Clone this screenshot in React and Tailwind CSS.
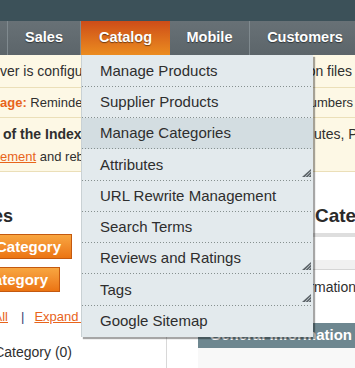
import React from "react";

const items = [
  { t: "Manage Products", h: "h-[32px]" },
  { t: "Supplier Products", h: "h-[31px]" },
  { t: "Manage Categories", h: "h-[31px]", active: true },
  { t: "Attributes", h: "h-[32px]", sub: true },
  { t: "URL Rewrite Management", h: "h-[31px]" },
  { t: "Search Terms", h: "h-[31px]" },
  { t: "Reviews and Ratings", h: "h-[31px]", sub: true },
  { t: "Tags", h: "h-[32px]", sub: true },
  { t: "Google Sitemap", h: "h-[31px]", last: true },
];

function Grip() {
  return (
    <svg width="9" height="8" viewBox="0 0 9 8" className="absolute right-[2px] bottom-[4px]">
      <polygon points="9,0 9,8 0,8" fill="#5d6469" />
      <line x1="3.2" y1="8" x2="9" y2="2.2" stroke="#cdd6da" strokeWidth="0.9" />
      <line x1="6.2" y1="8" x2="9" y2="5.2" stroke="#cdd6da" strokeWidth="0.9" />
    </svg>
  );
}

export default function App() {
  return (
    <div className="w-[355px] h-[368px] relative overflow-hidden bg-white font-['Liberation_Sans',Arial,sans-serif] text-[#2f2f2f]">
      {/* top bar */}
      <div className="h-[21px] bg-[#3c5159]" />
      {/* nav */}
      <div className="h-[34px] flex bg-gradient-to-b from-[#687176] to-[#5c656a] text-white font-bold text-[14.5px] [text-shadow:0_1px_1px_rgba(0,0,0,0.5)] whitespace-nowrap">
        <div className="w-[8px] shrink-0 border-r border-[#808a8f]" />
        <div className="w-[73px] shrink-0 flex items-center justify-center border-r border-[#808a8f]">Sales</div>
        <div className="w-[89px] shrink-0 flex items-center justify-center bg-gradient-to-b from-[#cd4c18] to-[#eb8c20]">Catalog</div>
        <div className="w-[80px] shrink-0 flex items-center justify-center border-r border-[#808a8f]">Mobile</div>
        <div className="w-[110px] shrink-0 flex items-center justify-center">Customers</div>
      </div>

      {/* notices */}
      <div className="bg-[#fdf8e5] whitespace-nowrap">
        <div className="h-[33px] flex items-center border-b border-[#ebdfb8] text-[14px]">
          <div className="w-[81px] shrink-0 flex">
            <span className="w-0 shrink-0 flex justify-end">Your web ser</span>
            <span className="shrink-0">ver is configured incorrectly.</span>
          </div>
          <div className="ml-auto pr-[3px] shrink-0">As a result, configuration files</div>
        </div>
        <div className="h-[30px] flex items-center border-b border-[#ebdfb8] text-[13px]">
          <div className="w-[81px] shrink-0 flex">
            <span className="w-0 shrink-0 flex justify-end font-bold text-[#e8641b]">Latest Mess</span>
            <span className="shrink-0"><b className="text-[#e8641b]">age:</b> Reminder: Change</span>
          </div>
          <div className="ml-auto pr-[2px] shrink-0">Magento's default phone numbers</div>
        </div>
        <div className="pt-[7px] pb-[5px] border-b border-[#ebdfb8]">
          <div className="h-[18px] leading-[18px] flex text-[14px]">
            <div className="w-[314px] shrink-0 flex overflow-hidden">
              <span className="w-[3px] shrink-0 flex justify-end font-bold">One or more&nbsp;</span>
              <span className="shrink-0 font-bold">of the Indexes are not up to date:</span>
            </div>
            <span className="shrink-0">utes, Product Prices</span>
          </div>
          <div className="mt-[5px] h-[18px] leading-[18px] flex text-[13px]">
            <span className="w-0 shrink-0 flex justify-end">
              Click here to go to&nbsp;<span className="text-[#e8641b] underline">Index Manag</span>
            </span>
            <span className="shrink-0">
              <span className="text-[#e8641b] underline">ement</span> and rebuild required indexes.
            </span>
          </div>
        </div>
      </div>

      {/* content */}
      <div className="flex h-[196px] whitespace-nowrap">
        <div className="w-[166px] shrink-0 flex flex-col pt-[32px]">
          <div className="w-[13px] flex justify-end text-[18px] leading-[24px] font-bold text-[#2a2a2a]">Categories</div>
          <div className="mt-[6px] w-[72px] flex justify-end">
            <button className="shrink-0 h-[25px] pl-[10px] pr-[10px] border border-[#c4590f] bg-gradient-to-b from-[#f8a640] to-[#eb7411] text-white font-bold text-[15px] leading-none">
              Add Root Category
            </button>
          </div>
          <div className="mt-[8px] w-[60px] flex justify-end">
            <button className="shrink-0 h-[25px] pl-[10px] pr-[11px] border border-[#c4590f] bg-gradient-to-b from-[#f8a640] to-[#eb7411] text-white font-bold text-[15px] leading-none">
              Add Subcategory
            </button>
          </div>
          <div className="mt-[16px] h-[18px] flex items-center text-[13px]">
            <div className="w-[8px] shrink-0 flex justify-end">
              <span className="text-[#e8641b] underline">Collapse All</span>
            </div>
            <span className="ml-[13px] text-[#3b3b72]">|</span>
            <span className="ml-[10px] text-[#e8641b] underline">Expand All</span>
          </div>
          <div className="mt-[17px] w-[72px] flex justify-end text-[14px] leading-[18px]">Default Category (0)</div>
        </div>

        <div className="flex-1 min-w-0 border-l border-[#d8d8d8] flex flex-col pl-[31px] pt-[32px]">
          <div className="pl-[117px] text-[19px] leading-[24px] font-bold text-[#2a2a2a] overflow-visible">Category</div>
          <div className="mt-[5px] h-[4px] bg-[#dedede]" />
          <div className="mt-[23px] h-[10px] bg-[#f1f1f1] border-b border-[#d6d6d6]" />
          <div className="mt-[8px] h-[18px] leading-[18px] text-[14px] flex justify-end mr-[-1px]">General Information</div>
          <div className="mt-[27px] h-[25px] shrink-0 bg-[#6e8790] text-white font-bold text-[15px] flex items-center justify-end pr-[3px]">
            General Information
          </div>
          <div className="flex-1 bg-[#f8f8f8]" />
        </div>
      </div>

      {/* dropdown menu */}
      <div className="absolute left-[81px] top-[55px] w-[232px] bg-[#e3eaed] border-l border-[#c9d1d4] shadow-[2px_2px_1px_rgba(0,0,0,0.35)] text-[15px] text-[#2e2e2e] whitespace-nowrap">
        {items.map((it) => (
          <div
            key={it.t}
            className={
              "relative flex items-center pl-[18px] " +
              it.h +
              (it.active ? " bg-[#d3dde1]" : "") +
              (it.last
                ? ""
                : " bg-[linear-gradient(to_right,#86908f_1px,transparent_1px)] bg-[length:3px_1px] bg-repeat-x bg-bottom")
            }
          >
            {it.t}
            {it.sub && <Grip />}
          </div>
        ))}
      </div>
    </div>
  );
}
